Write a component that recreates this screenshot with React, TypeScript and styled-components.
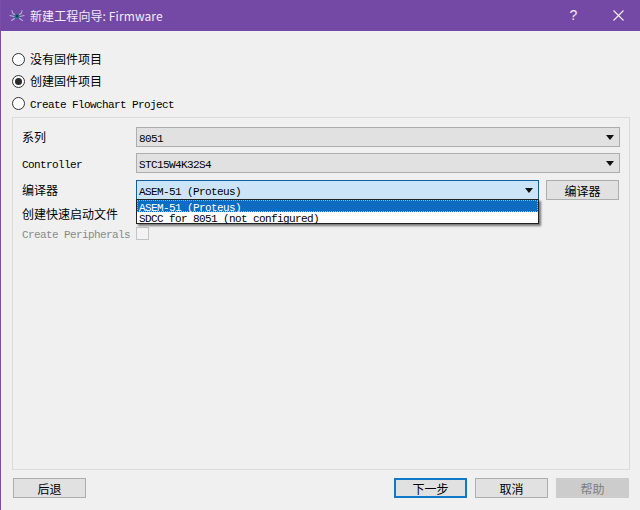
import React from "react";
import styled, { createGlobalStyle } from "styled-components";

const GlobalStyle = createGlobalStyle`
  html, body {
    margin: 0;
    padding: 0;
    background: #f0f0f0;
  }
  body {
    font-family: "Liberation Mono", "Noto Sans CJK SC", monospace;
  }
`;

const Window = styled.div`
  width: 640px;
  height: 510px;
  display: flex;
  flex-direction: column;
  overflow: hidden;
  background: #f0f0f0;
  border-left: 1px solid #7b4ca8;
  box-sizing: border-box;
`;

const TitleBar = styled.div`
  height: 31px;
  margin-left: -1px;
  flex: none;
  box-sizing: border-box;
  display: flex;
  align-items: center;
  background: #7449a6;
  color: #f2ecf8;
  padding: 0 0 1px 9px;
  font-family: "Noto Sans CJK SC", sans-serif;
  font-size: 12px;
`;

const TitleText = styled.span`
  margin-left: 5px;
  flex: 1;
  letter-spacing: 0.1px;
`;

const TitleButton = styled.span<{ $w: number }>`
  width: ${({ $w }) => $w}px;
  display: flex;
  justify-content: center;
  align-items: center;
  font-family: "Liberation Sans", sans-serif;
  font-size: 14px;
`;

const Body = styled.div`
  flex: 1;
  display: flex;
  flex-direction: column;
  padding: 21px 10px 12px 11px;
  min-height: 0;
`;

const RadioList = styled.div`
  display: flex;
  flex-direction: column;
  gap: 8px;
  margin-bottom: 7px;
`;

const RadioRow = styled.label`
  height: 14px;
  display: flex;
  align-items: center;
  gap: 5px;
  color: #000;
`;

const RadioDot = styled.span<{ $checked?: boolean }>`
  position: relative;
  width: 13px;
  height: 13px;
  box-sizing: border-box;
  border: 1px solid #333;
  border-radius: 50%;
  background: #fff;
  display: flex;
  align-items: center;
  justify-content: center;
  &::after {
    content: "";
    display: ${({ $checked }) => ($checked ? "block" : "none")};
    width: 7px;
    height: 7px;
    border-radius: 50%;
    background: #2b2b2b;
  }
`;

const Cjk = styled.span`
  font-family: "Noto Sans CJK SC", sans-serif;
  font-size: 12px;
  line-height: 14px;
`;

const Latin = styled.span<{ $disabled?: boolean }>`
  display: inline-block;
  font-family: "Liberation Mono", monospace;
  font-size: 11px;
  letter-spacing: -0.6px;
  line-height: 14px;
  padding-top: 3px;
  white-space: pre;
  color: ${({ $disabled }) => ($disabled ? "#8a8a8a" : "#000")};
`;

const GroupBox = styled.div`
  flex: 1;
  border: 1px solid #dcdcdc;
  padding: 9px 9px 0 9px;
  display: grid;
  grid-template-columns: 114px 1fr;
  grid-template-rows: 20px 21px 20px 15px 13px;
  row-gap: 6px;
  align-content: start;
  align-items: center;
  min-height: 0;
`;

const Combo = styled.div<{ $open?: boolean }>`
  height: 20px;
  box-sizing: border-box;
  align-self: start;
  display: flex;
  align-items: center;
  justify-content: space-between;
  padding: 0 5px 0 2px;
  border: 1px solid ${({ $open }) => ($open ? "#0f5f9e" : "#adadad")};
  background: ${({ $open }) => ($open ? "#cce4f7" : "#e1e1e1")};
  flex: 1;
`;

const Arrow = styled.span`
  width: 0;
  height: 0;
  border-left: 4px solid transparent;
  border-right: 4px solid transparent;
  border-top: 5px solid #111;
  flex: none;
`;

const CompilerRow = styled.div`
  position: relative;
  display: flex;
  gap: 7px;
`;

const ComboWrap = styled.div`
  position: relative;
  width: 403px;
  display: flex;
`;

const Popup = styled.div`
  position: absolute;
  left: 0;
  right: 0;
  top: 19px;
  height: 25px;
  box-sizing: border-box;
  background: #fff;
  border: 1px solid #222;
  box-shadow: 2px 2px 2px rgba(0, 0, 0, 0.5);
  z-index: 2;
`;

const PopupItem = styled.div<{ $active?: boolean }>`
  height: ${({ $active }) => ($active ? 12 : 11)}px;
  box-sizing: border-box;
  display: flex;
  align-items: center;
  padding-left: 2px;
  background: ${({ $active }) => ($active ? "#0a6cc4" : "transparent")};
  outline: ${({ $active }) => ($active ? "1px dotted #8fb8dc" : "none")};
  outline-offset: -1px;
  span {
    color: ${({ $active }) => ($active ? "#fff" : "#000")};
  }
`;

const Button = styled.div<{ $variant?: "default" | "disabled" }>`
  width: 73px;
  height: 20px;
  box-sizing: border-box;
  flex: none;
  display: flex;
  align-items: center;
  justify-content: center;
  font-family: "Noto Sans CJK SC", sans-serif;
  font-size: 12px;
  color: ${({ $variant }) => ($variant === "disabled" ? "#7f7f7f" : "#000")};
  background: ${({ $variant }) => ($variant === "disabled" ? "#cccccc" : "#e1e1e1")};
  border: ${({ $variant }) =>
    $variant === "default" ? "2px solid #0f78c8" : "1px solid #adadad"};
  border-color: ${({ $variant }) =>
    $variant === "disabled" ? "#cccccc" : $variant === "default" ? "#0f78c8" : "#adadad"};
`;

const Checkbox = styled.div`
  width: 13px;
  height: 13px;
  box-sizing: border-box;
  border: 1px solid #c4c4c4;
  background: #f3f3f3;
`;

const Footer = styled.div`
  flex: none;
  height: 20px;
  margin-top: 8px;
  padding: 0 1px;
  display: flex;
  align-items: center;
  gap: 8px;
`;

const Spacer = styled.div`
  flex: 1;
`;

const BugIcon = () => (
  <svg width="16" height="13" viewBox="0 0 16 13" fill="none">
    <ellipse cx="8" cy="7.5" rx="3.2" ry="2.6" fill="#2f6f94" />
    <circle cx="8" cy="7" r="1.3" fill="#163a58" />
    <g stroke="#b5b0d2" strokeWidth="1.1" strokeLinecap="round">
      <path d="M5.5 5.5 L3.5 4 L3 1.5 M5 7.5 L1 6.5 M5.5 9.5 L2.5 11.5" />
      <path d="M10.5 5.5 L12.5 4 L13 1.5 M11 7.5 L15 6.5 M10.5 9.5 L13.5 11.5" />
    </g>
  </svg>
);

const CloseIcon = () => (
  <svg width="11" height="11" viewBox="0 0 11 11" stroke="#f5f0fa" strokeWidth="1.1" fill="none">
    <path d="M0.5 0.5 L10.5 10.5 M10.5 0.5 L0.5 10.5" />
  </svg>
);

export default function App() {
  return (
    <>
      <GlobalStyle />
      <Window>
        <TitleBar>
          <BugIcon />
          <TitleText>新建工程向导: Firmware</TitleText>
          <TitleButton $w={45}>?</TitleButton>
          <TitleButton $w={44}>
            <CloseIcon />
          </TitleButton>
        </TitleBar>
        <Body>
          <RadioList>
            <RadioRow>
              <RadioDot />
              <Cjk>没有固件项目</Cjk>
            </RadioRow>
            <RadioRow>
              <RadioDot $checked />
              <Cjk>创建固件项目</Cjk>
            </RadioRow>
            <RadioRow>
              <RadioDot />
              <Latin>Create Flowchart Project</Latin>
            </RadioRow>
          </RadioList>
          <GroupBox>
            <Cjk>系列</Cjk>
            <Combo>
              <Latin>8051</Latin>
              <Arrow />
            </Combo>
            <Latin>Controller</Latin>
            <Combo>
              <Latin>STC15W4K32S4</Latin>
              <Arrow />
            </Combo>
            <Cjk>编译器</Cjk>
            <CompilerRow>
              <ComboWrap>
                <Combo $open>
                  <Latin>ASEM-51 (Proteus)</Latin>
                  <Arrow />
                </Combo>
                <Popup>
                  <PopupItem $active>
                    <Latin>ASEM-51 (Proteus)</Latin>
                  </PopupItem>
                  <PopupItem>
                    <Latin>SDCC for 8051 (not configured)</Latin>
                  </PopupItem>
                </Popup>
              </ComboWrap>
              <Button>编译器</Button>
            </CompilerRow>
            <Cjk>创建快速启动文件</Cjk>
            <div />
            <Latin $disabled>Create Peripherals</Latin>
            <Checkbox />
          </GroupBox>
          <Footer>
            <Button>后退</Button>
            <Spacer />
            <Button $variant="default">下一步</Button>
            <Button>取消</Button>
            <Button $variant="disabled">帮助</Button>
          </Footer>
        </Body>
      </Window>
    </>
  );
}
